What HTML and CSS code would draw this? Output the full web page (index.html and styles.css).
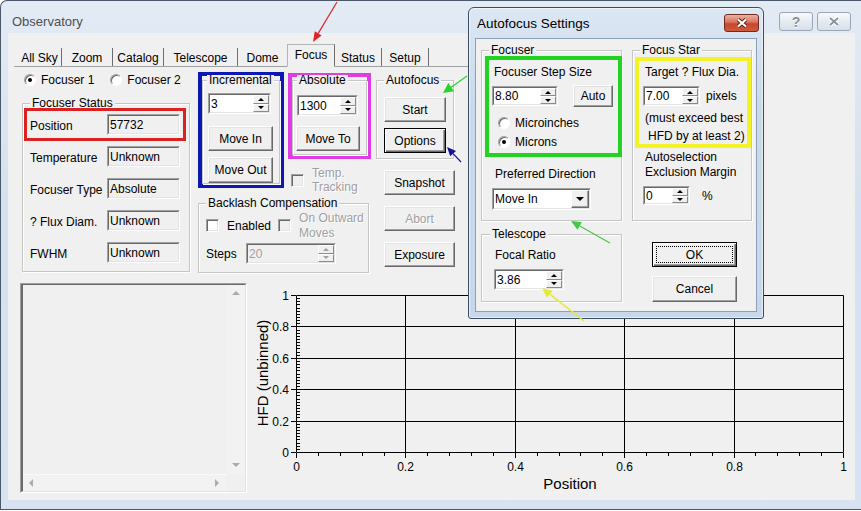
FILE: index.html
```html
<!DOCTYPE html>
<html lang="en">
<head>
<meta charset="utf-8">
<title>Observatory</title>
<link rel="stylesheet" href="styles.css">
</head>
<body>
<div class="desk">
  <div class="main">
    <div class="titlebar">
      <span class="title">Observatory</span>
      <span class="capbtns">
        <span class="capbtn help">?</span>
        <span class="capbtn"><svg width="14" height="11" viewBox="0 0 14 11"><path class="xo" d="M3 2L11 9M11 2L3 9"/><path class="xi" d="M3 2L11 9M11 2L3 9"/></svg></span>
      </span>
    </div>
    <div class="client">
      <div class="tabs">
        <span class="tab t-all">All Sky</span>
        <span class="tab t-zoom">Zoom</span>
        <span class="tab t-cat">Catalog</span>
        <span class="tab t-tel">Telescope</span>
        <span class="tab t-dome pre">Dome</span>
        <span class="tab t-focus sel">Focus</span>
        <span class="tab t-status">Status</span>
        <span class="tab t-setup">Setup</span>
      </div>
      <div class="top">
        <div class="colA">
          <div class="radios">
            <span class="opt"><span class="radio on"></span><span class="olbl">Focuser 1</span></span>
            <span class="opt"><span class="radio"></span><span class="olbl">Focuser 2</span></span>
          </div>
          <div class="group status">
            <div class="legend">Focuser Status</div>
            <div class="srow hl-red"><span class="lab">Position</span><span class="field ro sbox"><span class="fin"><span class="val">57732</span></span></span></div>
            <div class="srow"><span class="lab">Temperature</span><span class="field ro sbox"><span class="fin"><span class="val">Unknown</span></span></span></div>
            <div class="srow"><span class="lab">Focuser Type</span><span class="field ro sbox"><span class="fin"><span class="val">Absolute</span></span></span></div>
            <div class="srow"><span class="lab">? Flux Diam.</span><span class="field ro sbox"><span class="fin"><span class="val">Unknown</span></span></span></div>
            <div class="srow"><span class="lab">FWHM</span><span class="field ro sbox"><span class="fin"><span class="val">Unknown</span></span></span></div>
          </div>
        </div>
        <div class="colB">
          <div class="row1">
            <div class="hl hl-blue">
              <div class="group incr">
                <div class="legend l4">Incremental</div>
                <div class="field spin sp-incr"><span class="fin"><span class="val">3</span><span class="spb"><i class="up"></i><i class="dn"></i></span></span></div>
                <div class="btn b-movein">Move In</div>
                <div class="btn b-moveout">Move Out</div>
              </div>
            </div>
            <div class="subcol">
              <div class="hl hl-mag">
                <div class="group abs">
                  <div class="legend l4">Absolute</div>
                  <div class="field spin sp-abs"><span class="fin"><span class="val">1300</span><span class="spb"><i class="up"></i><i class="dn"></i></span></span></div>
                  <div class="btn b-moveto">Move To</div>
                </div>
              </div>
              <div class="temp"><span class="chk dis"></span><span class="twoline gray">Temp.<br>Tracking</span></div>
            </div>
          </div>
          <div class="group backlash">
            <div class="legend">Backlash Compensation</div>
            <div class="bl1"><span class="chk"></span><span class="bl-en">Enabled</span><span class="chk dis bl-c2"></span><span class="twoline2 gray">On Outward<br>Moves</span></div>
            <div class="bl2"><span class="bl-steps">Steps</span><span class="field spin dis sp-steps"><span class="fin"><span class="val">20</span><span class="spb"><i class="up"></i><i class="dn"></i></span></span></span></div>
          </div>
        </div>
        <div class="colC">
          <div class="group autof">
            <div class="legend">Autofocus</div>
            <div class="btn b-start">Start</div>
            <div class="btn def b-opt">Options</div>
          </div>
          <div class="btn b-side">Snapshot</div>
          <div class="btn dis b-side">Abort</div>
          <div class="btn b-side">Exposure</div>
        </div>
      </div>
      <div class="bottom">
        <div class="listbox">
          <div class="lbin">
            <div class="lbarea"></div>
            <div class="vsb"><i class="ar a-up"></i><i class="ar a-dn"></i></div>
            <div class="hsb"><i class="ar a-lf"></i><i class="ar a-rt"></i></div>
            <div class="corner"></div>
          </div>
        </div>
        <svg class="chart" width="605" height="217" viewBox="0 0 605 217">
          <path class="ln" d="M46.5 12.5H593.5M46.5 43.5H593.5M46.5 75.5H593.5M46.5 106.5H593.5M46.5 138.5H593.5M46.5 169.5H593.5M46.5 12.5V169.5M155.5 12.5V169.5M265.5 12.5V169.5M374.5 12.5V169.5M484.5 12.5V169.5M593.5 12.5V169.5"/>
          <path class="ln" d="M41 12.5h5M41 43.5h5M41 75.5h5M41 106.5h5M41 138.5h5M41 169.5h5M46.5 170v5M155.5 170v5M265.5 170v5M374.5 170v5M484.5 170v5M593.5 170v5"/>
          <path class="ln" d="M47 166.5h3M47 163.5h3M47 160.5h3M47 156.5h3M47 153.5h3M47 150.5h3M47 147.5h3M47 144.5h3M47 141.5h3M47 134.5h3M47 131.5h3M47 128.5h3M47 125.5h3M47 122.5h3M47 119.5h3M47 116.5h3M47 112.5h3M47 109.5h3M47 103.5h3M47 100.5h3M47 97.5h3M47 94.5h3M47 91.5h3M47 87.5h3M47 84.5h3M47 81.5h3M47 78.5h3M47 72.5h3M47 69.5h3M47 65.5h3M47 62.5h3M47 59.5h3M47 56.5h3M47 53.5h3M47 50.5h3M47 47.5h3M47 40.5h3M47 37.5h3M47 34.5h3M47 31.5h3M47 28.5h3M47 25.5h3M47 21.5h3M47 18.5h3M47 15.5h3"/>
          <path class="ln" d="M68.5 170v3M90.5 170v3M112.5 170v3M134.5 170v3M177.5 170v3M199.5 170v3M221.5 170v3M243.5 170v3M287.5 170v3M309.5 170v3M330.5 170v3M352.5 170v3M396.5 170v3M418.5 170v3M440.5 170v3M462.5 170v3M505.5 170v3M527.5 170v3M549.5 170v3M571.5 170v3"/>
          <text class="yl" x="39" y="16.5">1</text>
          <text class="yl" x="39" y="47.5">0.8</text>
          <text class="yl" x="39" y="79.5">0.6</text>
          <text class="yl" x="39" y="110.5">0.4</text>
          <text class="yl" x="39" y="142.5">0.2</text>
          <text class="yl" x="39" y="173.5">0</text>
          <text class="xl" x="46.5" y="188">0</text>
          <text class="xl" x="155.5" y="188">0.2</text>
          <text class="xl" x="265.5" y="188">0.4</text>
          <text class="xl" x="374.5" y="188">0.6</text>
          <text class="xl" x="484.5" y="188">0.8</text>
          <text class="xl" x="593.5" y="188">1</text>
          <text class="axt" x="320" y="206">Position</text>
          <text class="axt" transform="translate(17.5 90) rotate(-90)">HFD (unbinned)</text>
        </svg>
      </div>
    </div>
  </div>

  <div class="dialog">
    <div class="dtitle">
      <span class="dt">Autofocus Settings</span>
      <span class="dclose"><svg width="16" height="12" viewBox="0 0 16 12"><path class="cxo" d="M4 2.5L12 9.5M12 2.5L4 9.5"/><path class="cxi" d="M4 2.5L12 9.5M12 2.5L4 9.5"/></svg></span>
    </div>
    <div class="dclient">
      <div class="dcolL">
        <div class="group dg-focuser">
          <div class="legend">Focuser</div>
          <div class="hl hl-green">
            <div class="dtext">Focuser Step Size</div>
            <div class="drow">
              <span class="field spin sp-step"><span class="fin"><span class="val">8.80</span><span class="spb"><i class="up"></i><i class="dn"></i></span></span></span>
              <span class="btn b-auto">Auto</span>
            </div>
            <div class="ropt"><span class="radio"></span><span class="olbl">Microinches</span></div>
            <div class="ropt r2"><span class="radio on"></span><span class="olbl">Microns</span></div>
          </div>
          <div class="dlabel">Preferred Direction</div>
          <div class="field combo"><span class="fin"><span class="val">Move In</span><span class="dd"></span></span></div>
        </div>
        <div class="group dg-tel">
          <div class="legend l8">Telescope</div>
          <div class="dlabel fr">Focal Ratio</div>
          <div class="field spin sp-fr"><span class="fin"><span class="val">3.86</span><span class="spb"><i class="up"></i><i class="dn"></i></span></span></div>
        </div>
      </div>
      <div class="dcolR">
        <div class="group dg-star">
          <div class="legend">Focus Star</div>
          <div class="hl hl-yellow">
            <div class="ytext">Target ? Flux Dia.</div>
            <div class="yrow">
              <span class="field spin sp-px"><span class="fin"><span class="val">7.00</span><span class="spb"><i class="up"></i><i class="dn"></i></span></span></span>
              <span class="pixels">pixels</span>
            </div>
            <div class="ynote1">(must exceed best</div>
            <div class="ynote2">HFD by at least 2)</div>
          </div>
          <div class="auto-sel">Autoselection<br>Exclusion Margin</div>
          <div class="mrow">
            <span class="field spin sp-m"><span class="fin"><span class="val">0</span><span class="spb"><i class="up"></i><i class="dn"></i></span></span></span>
            <span class="pct">%</span>
          </div>
        </div>
        <div class="btn def b-ok"><span class="frect">OK</span></div>
        <div class="btn b-cancel">Cancel</div>
      </div>
    </div>
  </div>

  <svg class="annot" width="861" height="511" viewBox="0 0 861 511">
    <line class="a-red" x1="337" y1="2" x2="318.2" y2="33.4"/>
    <polygon class="f-red" points="313,42 321.6,35.5 314.8,31.3"/>
    <line class="a-green" x1="467" y1="76" x2="451.2" y2="87.2"/>
    <polygon class="f-green" points="443,93 454.1,91.3 448.3,83.1"/>
    <line class="a-blue" x1="461" y1="162" x2="453.1" y2="153.6"/>
    <polygon class="f-blue" points="447,147 456,150.9 450.2,156.3"/>
    <line class="a-green2" x1="610" y1="243" x2="579.7" y2="225.9"/>
    <polygon class="f-green2" points="571,221 581.9,222 577.5,229.8"/>
    <line class="a-yellow" x1="584" y1="321" x2="549.8" y2="294.2"/>
    <polygon class="f-yellow" points="542,288 552.6,290.7 547,297.7"/>
  </svg>
</div>
</body>
</html>
```

FILE: styles.css
```css
* { box-sizing: border-box; }
html, body { margin: 0; padding: 0; }
body {
  width: 861px; height: 511px; overflow: hidden; background: #fff;
  font-family: "Liberation Sans", Arial, sans-serif; font-size: 12px; line-height: 14px; color: #000;
}
.desk { position: relative; width: 861px; height: 511px; }

/* main window frame */
.main {
  width: 861px; height: 510px; border: 1px solid #4a5869; border-right: 0;
  border-radius: 7px 0 0 0;
  background: linear-gradient(#e3ebf5, #d5e1ee 40%, #d7e3f0);
  display: flex; flex-direction: column;
}
.titlebar { flex: none; height: 32px; display: flex; justify-content: space-between; align-items: flex-start; padding: 11px 10px 0 11px; }
.title { margin-top: 2px; font-size: 13px; line-height: 16px; color: #4f4f4f; }
.capbtns { display: flex; gap: 4px; }
.capbtn {
  width: 34px; height: 19px; border: 1px solid #9aa7b8; border-radius: 3px;
  background: linear-gradient(#f7f9fb, #e6ebf1 50%, #d9e0e9);
  display: flex; align-items: center; justify-content: center;
  color: #86909e; font-weight: bold; font-size: 14px; text-shadow: 0 1px 0 #fff;
}
.capbtn .xo { stroke: #fff; stroke-width: 4; }
.capbtn .xi { stroke: #8a94a2; stroke-width: 2; }
.client { flex: none; margin-left: 7px; width: 847px; height: 467px; background: #f0f0f0; }

/* tabs */
.tabs {
  margin: 11px 0 0 6px; width: 456px; height: 23px; border-bottom: 1px solid #a0a0a0;
  display: flex; align-items: flex-end; padding-left: 4px;
}
.tab { height: 18px; border-right: 1px solid #6e6e6e; display: flex; align-items: center; justify-content: center; padding-top: 1px; white-space: nowrap; }
.tab.pre { border-right: 0; }
.tab.sel { height: 23px; margin-bottom: -1px; border: 1px solid; border-color: #b4b4b4 #6e6e6e transparent #b4b4b4; background: #f0f0f0; padding: 0 0 2px; }
.t-all { width: 44px; } .t-zoom { width: 51px; } .t-cat { width: 51px; } .t-tel { width: 74px; }
.t-dome { width: 49px; } .t-focus { width: 48px; } .t-status { width: 47px; } .t-setup { width: 47px; }

/* generic controls */
.group { border: 1px solid #c6c6c6; box-shadow: inset 1px 1px 0 #fff, 1px 1px 0 #fff; }
.legend { width: max-content; margin: -6px 0 0 7px; padding: 0 2px; height: 10px; line-height: 10px; background: #f0f0f0; white-space: nowrap; }
.legend.l4 { margin-left: 4px; }
.legend.l8 { margin-left: 8px; }
.hl { border: 4px solid; }

.field { display: flex; flex: none; border: 1px solid; border-color: #a0a0a0 #fff #fff #a0a0a0; }
.fin { flex: 1; display: flex; align-items: center; min-width: 0; border: 1px solid; border-color: #696969 #e3e3e3 #e3e3e3 #696969; background: #fff; }
.val { flex: 1; padding-left: 1px; white-space: nowrap; overflow: hidden; }
.ro .fin { background: #f0f0f0; }
.dis .fin { background: #f0f0f0; color: #a0a0a0; }
.spb { align-self: stretch; width: 16px; display: flex; flex-direction: column; }
.spb i { flex: 1; display: flex; align-items: center; justify-content: center; background: #f0f0f0; border: 1px solid; border-color: #fff #8a8a8a #8a8a8a #fff; }
.spb i.up::after { content: ""; border: 3px solid transparent; border-top-width: 0; border-bottom-color: #000; }
.spb i.dn::after { content: ""; border: 3px solid transparent; border-bottom-width: 0; border-top-color: #000; }
.dis .spb i.up::after { border-bottom-color: #a0a0a0; }
.dis .spb i.dn::after { border-top-color: #a0a0a0; }

.btn {
  display: flex; align-items: center; justify-content: center; white-space: nowrap;
  background: #f0f0f0; border: 1px solid; border-color: #fff #696969 #696969 #fff;
  box-shadow: inset -1px -1px 0 #a0a0a0, inset 1px 1px 0 #e3e3e3;
}
.btn.def { border-color: #000; box-shadow: inset 1px 1px 0 #fff, inset -1px -1px 0 #696969, inset -2px -2px 0 #a0a0a0; }
.btn.dis, .gray { color: #a0a0a0; text-shadow: 1px 1px 0 #fff; }

.radio {
  flex: none; width: 12px; height: 12px; border-radius: 50%; border: 1px solid;
  border-color: #a0a0a0 #fff #fff #a0a0a0; background: #fff; box-shadow: inset 1px 1px 0 #696969;
  display: flex; align-items: center; justify-content: center;
}
.radio.on::after { content: ""; width: 4px; height: 4px; border-radius: 50%; background: #000; }
.olbl { margin-left: 5px; white-space: nowrap; }
.chk {
  flex: none; width: 13px; height: 13px; border: 1px solid; border-color: #a0a0a0 #fff #fff #a0a0a0;
  background: #fff; box-shadow: inset 1px 1px 0 #696969, inset -1px -1px 0 #e3e3e3;
}
.chk.dis { background: #f0f0f0; }

/* top area of the Focus page */
.top { display: flex; align-items: flex-start; padding-left: 14px; }
.colA { flex: none; width: 168px; margin-top: 6px; }
.radios { display: flex; align-items: center; height: 14px; padding-left: 2px; }
.opt { display: flex; align-items: center; }
.opt + .opt { margin-left: 16px; }
.status { margin-top: 16px; height: 169px; }
.srow { display: flex; align-items: center; width: 150px; height: 21px; margin: 11px 0 0 7px; }
.status .legend + .srow { margin-top: 6px; }
.lab { flex: 1; padding-top: 2px; white-space: nowrap; }
.sbox { width: 73px; height: 21px; }
.hl-red { outline: 3px solid #dc2121; outline-offset: 3px; }

.colB { flex: none; width: 173px; margin: 5px 0 0 8px; }
.row1 { display: flex; align-items: flex-start; gap: 4px; height: 116px; }
.hl-blue { width: 86px; height: 116px; border-color: #0d17b3; }
.incr { margin-top: 4px; height: 104px; }
.sp-incr { margin: 8px 0 0 5px; width: 63px; height: 21px; }
.b-movein { margin: 12px 0 0 5px; width: 65px; height: 25px; }
.b-moveout { margin: 6px 0 0 5px; width: 65px; height: 26px; }
.subcol { width: 83px; }
.hl-mag { margin-top: 1px; width: 83px; height: 86px; border-color: #e03ce3; }
.abs { margin-top: 3px; height: 75px; }
.sp-abs { margin: 10px 0 0 4px; width: 61px; height: 21px; }
.b-moveto { margin: 10px 0 0 3px; width: 64px; height: 25px; }
.temp { display: flex; align-items: center; height: 28px; margin: 7px 0 0 3px; }
.twoline { margin-left: 8px; line-height: 14px; }
.backlash { margin-top: 15px; width: 171px; height: 70px; }
.bl1 { display: flex; align-items: center; height: 29px; margin: 3px 0 0 7px; }
.bl-en { margin-left: 8px; }
.bl-c2 { margin-left: 7px; }
.twoline2 { margin-left: 8px; line-height: 15px; white-space: nowrap; }
.bl2 { display: flex; align-items: center; height: 21px; margin: 3px 0 0 7px; }
.bl-steps { width: 40px; }
.sp-steps { width: 90px; height: 21px; }

.colC { flex: none; width: 80px; margin: 13px 0 0 5px; }
.autof { width: 78px; height: 79px; }
.b-start { margin: 12px 0 0 7px; width: 62px; height: 25px; }
.b-opt { margin: 6px 0 0 7px; width: 62px; height: 25px; }
.b-side { margin: 11px 0 0 8px; width: 71px; height: 25px; }

/* bottom area */
.bottom { display: flex; align-items: flex-start; margin-top: 10px; }
.listbox { flex: none; width: 227px; height: 210px; margin-left: 12px; border: 1px solid; border-color: #a0a0a0 #fff #fff #a0a0a0; }
.lbin {
  height: 100%; border: 1px solid; border-left-width: 2px; border-color: #696969 #e3e3e3 #e3e3e3 #6a6a6a;
  display: grid; grid-template-columns: 1fr 18px; grid-template-rows: 1fr 17px; background: #f0f0f0;
}
.vsb { display: flex; flex-direction: column; justify-content: space-between; align-items: center; padding: 6px 0 7px; background: #f2f2f2; }
.hsb { display: flex; justify-content: space-between; align-items: center; padding: 0 8px 0 6px; background: #f2f2f2; border-top: 1px solid #fafafa; }
.corner { background: #f0f0f0; }
.ar { display: block; width: 0; height: 0; border: 4px solid transparent; }
.a-up { border-top-width: 0; border-bottom-color: #ababab; }
.a-dn { border-bottom-width: 0; border-top-color: #ababab; }
.a-lf { border-left-width: 0; border-right-color: #ababab; }
.a-rt { border-right-width: 0; border-left-color: #ababab; }

.chart { display: block; flex: none; margin-left: 3px; }
.chart .ln { stroke: #000; stroke-width: 1; fill: none; }
.chart text { font-family: "Liberation Sans", Arial, sans-serif; font-size: 12px; fill: #000; }
.chart .yl { text-anchor: end; }
.chart .xl { text-anchor: middle; }
.chart .axt { font-size: 15px; text-anchor: middle; }

/* dialog window */
.dialog {
  position: absolute; left: 468px; top: 7px; width: 296px; height: 312px;
  border: 1px solid #3a4c62; border-radius: 6px 6px 3px 3px;
  background: linear-gradient(#dce7f4, #cbdaeb 30%, #c8d8ea);
  box-shadow: inset 0 0 0 1px rgba(255,255,255,.55);
}
.dtitle { height: 30px; display: flex; justify-content: space-between; align-items: flex-start; padding: 0 4px 0 8px; }
.dt { margin-top: 8px; font-size: 13.5px; line-height: 16px; color: #000; }
.dclose {
  margin-top: 6px; width: 35px; height: 18px; border: 1px solid #6f2b1f; border-radius: 3px;
  background: linear-gradient(#eab1a3, #d9745d 45%, #c7462d 55%, #cf5a3c);
  display: flex; align-items: center; justify-content: center;
}
.dclose .cxo { stroke: #5b2016; stroke-width: 4; }
.dclose .cxi { stroke: #fff; stroke-width: 2.2; }
.dclient { margin-left: 6px; width: 282px; height: 274px; background: #f0f0f0; border: 1px solid #8b9fb7; display: flex; align-items: flex-start; }
.dcolL { flex: none; width: 141px; margin-left: 5px; }
.dcolR { flex: none; width: 120px; margin-left: 10px; }
.dg-focuser { margin-top: 11px; height: 171px; }
.hl-green { margin: 1px 0 0 3px; width: 137px; height: 101px; border-color: #22d422; padding: 5px 0 0 3px; }
.dtext { margin-left: 2px; }
.drow { display: flex; align-items: center; height: 22px; margin-top: 6px; }
.sp-step { width: 66px; height: 20px; }
.b-auto { margin-left: 15px; width: 40px; height: 22px; }
.ropt { display: flex; align-items: center; height: 14px; margin: 9px 0 0 6px; }
.ropt.r2 { margin-top: 5px; }
.dlabel { margin: 10px 0 0 13px; white-space: nowrap; }
.dlabel.fr { margin-top: 9px; }
.combo { margin: 7px 0 0 10px; width: 99px; height: 22px; }
.dd {
  align-self: stretch; width: 18px; display: flex; align-items: center; justify-content: center;
  background: #f0f0f0; border: 1px solid; border-color: #fff #696969 #696969 #fff;
  box-shadow: inset -1px -1px 0 #a0a0a0;
}
.dd::after { content: ""; border: 4px solid transparent; border-bottom-width: 0; border-top-color: #000; }
.dg-tel { margin-top: 13px; height: 68px; }
.sp-fr { margin: 7px 0 0 12px; width: 70px; height: 21px; }
.dg-star { margin-top: 11px; height: 171px; }
.hl-yellow { margin: 2px 0 0 2px; width: 116px; height: 91px; border-color: #f2f224; padding: 4px 0 0 6px; }
.ytext { white-space: nowrap; }
.yrow { display: flex; align-items: center; height: 20px; margin: 7px 0 0 -2px; }
.sp-px { width: 57px; height: 20px; }
.pixels { margin-left: 6px; }
.ynote1 { margin-top: 4px; line-height: 17px; white-space: nowrap; }
.ynote2 { margin: 1px 0 0 3px; line-height: 17px; white-space: nowrap; }
.auto-sel { margin: 2px 0 0 12px; line-height: 15px; white-space: nowrap; }
.mrow { display: flex; align-items: center; height: 19px; margin: 6px 0 0 10px; }
.sp-m { width: 47px; height: 19px; }
.pct { margin-left: 12px; }
.b-ok { margin: 21px 0 0 20px; width: 85px; height: 25px; padding: 3px; }
.frect { align-self: stretch; flex: 1; display: flex; align-items: center; justify-content: center; border: 1px dotted #000; }
.b-cancel { margin: 9px 0 0 20px; width: 85px; height: 26px; }

/* annotation arrows */
.annot { position: absolute; left: 0; top: 0; pointer-events: none; }
.a-red { stroke: #e02424; stroke-width: 1.2; }
.f-red { fill: #e02424; }
.a-green { stroke: #2ad22a; stroke-width: 1.2; }
.f-green { fill: #2ad22a; }
.a-blue { stroke: #14149a; stroke-width: 1.2; }
.f-blue { fill: #14149a; }
.a-green2 { stroke: #45c845; stroke-width: 1.2; }
.f-green2 { fill: #45c845; }
.a-yellow { stroke: #e8e838; stroke-width: 1.5; }
.f-yellow { fill: #e8e838; }
```
